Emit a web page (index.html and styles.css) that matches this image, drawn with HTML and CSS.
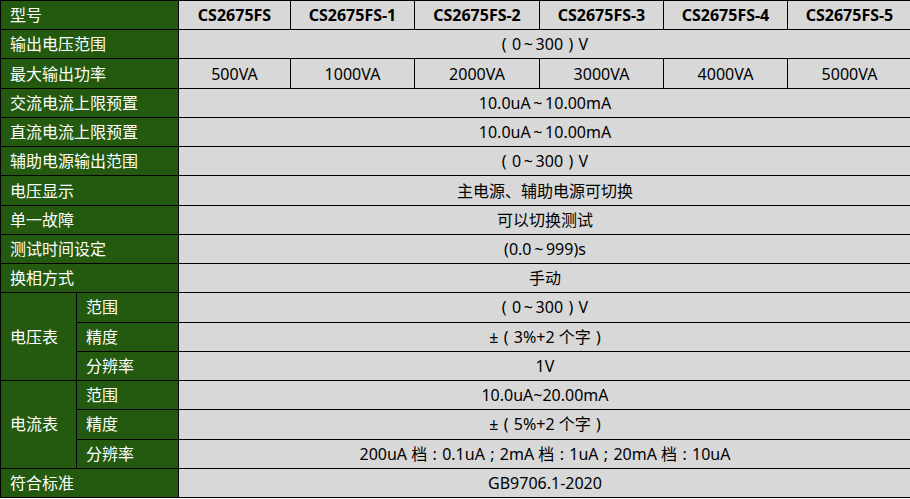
FILE: index.html
```html
<!DOCTYPE html>
<html lang="zh-CN">
<head>
<meta charset="utf-8">
<title>CS2675FS 参数</title>
<link rel="stylesheet" href="styles.css">
</head>
<body>
<div class="spec">
  <div class="cell lbl">型号</div>
  <div class="cell v hd">CS2675FS</div>
  <div class="cell v hd">CS2675FS-1</div>
  <div class="cell v hd">CS2675FS-2</div>
  <div class="cell v hd">CS2675FS-3</div>
  <div class="cell v hd">CS2675FS-4</div>
  <div class="cell v hd">CS2675FS-5</div>

  <div class="cell lbl">输出电压范围</div>
  <div class="cell val">(&#8196;0&thinsp;~&thinsp;300&#8196;)&#8196;V</div>

  <div class="cell lbl">最大输出功率</div>
  <div class="cell v">500VA</div>
  <div class="cell v">1000VA</div>
  <div class="cell v">2000VA</div>
  <div class="cell v">3000VA</div>
  <div class="cell v">4000VA</div>
  <div class="cell v">5000VA</div>

  <div class="cell lbl">交流电流上限预置</div>
  <div class="cell val">10.0uA&thinsp;~&thinsp;10.00mA</div>

  <div class="cell lbl">直流电流上限预置</div>
  <div class="cell val">10.0uA&thinsp;~&thinsp;10.00mA</div>

  <div class="cell lbl">辅助电源输出范围</div>
  <div class="cell val">(&#8196;0&thinsp;~&thinsp;300&#8196;)&#8196;V</div>

  <div class="cell lbl">电压显示</div>
  <div class="cell val">主电源、辅助电源可切换</div>

  <div class="cell lbl">单一故障</div>
  <div class="cell val">可以切换测试</div>

  <div class="cell lbl">测试时间设定</div>
  <div class="cell val">(0.0&thinsp;~&thinsp;999)s</div>

  <div class="cell lbl">换相方式</div>
  <div class="cell val">手动</div>

  <div class="cell grp">电压表</div>
  <div class="cell sub">范围</div>
  <div class="cell val">(&#8196;0&thinsp;~&thinsp;300&#8196;)&#8196;V</div>
  <div class="cell sub">精度</div>
  <div class="cell val">±&#8196;(&#8196;3%+2 个字&#8196;)</div>
  <div class="cell sub">分辨率</div>
  <div class="cell val">1V</div>

  <div class="cell grp">电流表</div>
  <div class="cell sub">范围</div>
  <div class="cell val">10.0uA~20.00mA</div>
  <div class="cell sub">精度</div>
  <div class="cell val">±&#8196;(&#8196;5%+2 个字&#8196;)</div>
  <div class="cell sub">分辨率</div>
  <div class="cell val">200uA 档&#8196;:&#8196;0.1uA&#8196;;&#8196;2mA 档&#8196;:&#8196;1uA&#8196;;&#8196;20mA 档&#8196;:&#8196;10uA</div>

  <div class="cell lbl">符合标准</div>
  <div class="cell val">GB9706.1-2020</div>
</div>
</body>
</html>
```
FILE: styles.css
```css
html, body {
  margin: 0;
  padding: 0;
  overflow: hidden;
  background: #ffffff;
}

.spec {
  display: grid;
  grid-template-columns: 75px 101px 111px 123px 124px 123px 123px 123px;
  grid-template-rows: repeat(17, 28.24px);
  gap: 1px;
  padding: 1px 0 1px 1px;
  width: max-content;
  background: #000000;
  font-family: "Noto Sans", "Noto Sans CJK SC", sans-serif;
  font-size: 16px;
  line-height: 1;
}

.cell {
  display: flex;
  align-items: center;
  white-space: pre;
  overflow: hidden;
}

.lbl {
  grid-column: 1 / 3;
  background: #235a0f;
  color: #ffffff;
  padding-left: 9px;
}

.grp {
  grid-column: 1 / 2;
  grid-row: span 3;
  background: #235a0f;
  color: #ffffff;
  padding-left: 9px;
}

.sub {
  grid-column: 2 / 3;
  background: #235a0f;
  color: #ffffff;
  padding-left: 9px;
}

.val {
  grid-column: 3 / 9;
  background: #d8d8d8;
  color: #000000;
  justify-content: center;
}

.v {
  background: #d8d8d8;
  color: #000000;
  justify-content: center;
}

.hd {
  font-weight: 700;
}
```
